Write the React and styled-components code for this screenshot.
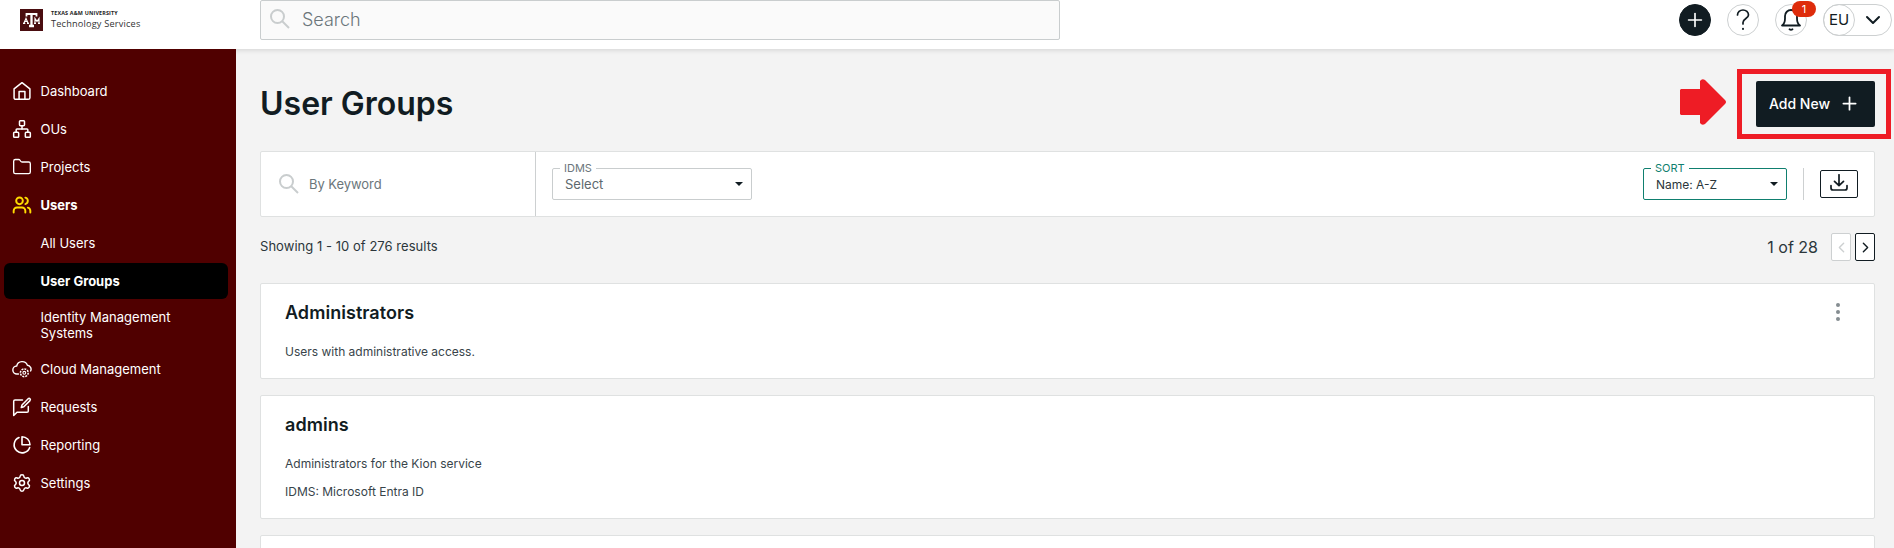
import React from "react";
import styled, { createGlobalStyle, css } from "styled-components";
import { Network, Folder, Users, Settings, Plus, ChevronDown, ChevronLeft, ChevronRight } from "lucide-react";

const Global = createGlobalStyle`
  *, *::before, *::after { box-sizing: border-box; }
  html, body, #root { height: 100%; }
  body {
    margin: 0;
    overflow: hidden;
    background: #f3f3f3;
    color: #111c22;
    font-family: Inter, "Liberation Sans", sans-serif;
  }
  h1, h2, p { margin: 0; }
  button { font-family: inherit; padding: 0; }
  svg { display: block; flex: none; }
`;

const Page = styled.div`
  display: flex;
  flex-direction: column;
  height: 548px;
  overflow: hidden;
`;

const TopBar = styled.header`
  position: relative;
  display: flex;
  align-items: flex-start;
  flex: none;
  height: 49px;
  background: #fff;
  box-shadow: 0 1px 5px rgba(0, 0, 0, 0.14);
`;

const Brand = styled.div`
  display: flex;
  gap: 8px;
  width: 260px;
  padding: 9px 0 0 20px;
`;

const BrandText = styled.div`
  display: flex;
  flex-direction: column;
  font-family: "Open Sans", sans-serif;
  white-space: nowrap;
`;

const BrandTop = styled.span`
  margin-top: 1px;
  height: 8px;
  font-size: 5.4px;
  font-weight: 700;
  line-height: 7px;
  letter-spacing: 0.16px;
  color: #222;
`;

const BrandName = styled.span`
  font-size: 9.2px;
  line-height: 12px;
  letter-spacing: 0.18px;
  color: #333;
`;

const SearchBox = styled.div`
  display: flex;
  align-items: center;
  gap: 12px;
  width: 800px;
  height: 40px;
  padding: 0 0 2px 9px;
  border: 1px solid #c9cdce;
  border-radius: 2px;
  background: #fafafa;
  color: #6b767b;
  font-size: 18px;
  font-weight: 300;
`;

const Actions = styled.div`
  display: flex;
  gap: 16px;
  margin-left: auto;
  padding: 4px 2px 0 0;
`;

const RoundButton = styled.button`
  position: relative;
  display: flex;
  align-items: center;
  justify-content: center;
  width: 32px;
  height: 32px;
  border: 1px solid ${(p) => (p.$dark ? "#111c22" : "#cdd0d1")};
  border-radius: 50%;
  background: ${(p) => (p.$dark ? "#111c22" : "#fff")};
  color: ${(p) => (p.$dark ? "#fff" : "#111c22")};
`;

const Badge = styled.span`
  position: absolute;
  top: -4px;
  left: 16px;
  width: 24px;
  height: 16px;
  border-radius: 8px;
  background: #de2c0b;
  color: #fff;
  font-size: 11px;
  line-height: 16px;
  text-align: center;
`;

const Account = styled.div`
  display: flex;
  align-items: center;
  width: 69px;
  height: 32px;
  border: 1px solid #cdd0d1;
  border-radius: 16px;
`;

const Initials = styled.span`
  width: 32px;
  height: 32px;
  margin: -1px 6px -1px -1px;
  border: 1px solid #cdd0d1;
  border-radius: 50%;
  font-size: 15px;
  line-height: 30px;
  text-align: center;
`;

const Body = styled.div`
  display: flex;
  flex: 1;
  min-height: 0;
`;

const Sidebar = styled.nav`
  position: relative;
  flex: none;
  width: 236px;
  padding: 24px 8px 0 4px;
  background: #500000;
`;

const NavItem = styled.a`
  display: flex;
  align-items: center;
  gap: 8px;
  height: ${(p) => (p.$tall ? "48px" : "36px")};
  margin-bottom: 2px;
  padding: 0 ${(p) => (p.$tall ? "24px 1px" : "0 0")} ${(p) => (p.$sub ? "36.5px" : "8px")};
  border-radius: 6px;
  color: #fff;
  font-size: 13px;
  line-height: 16px;
  ${(p) => p.$strong && css`font-weight: 700;`}
  ${(p) => p.$current && css`background: #000;`}
`;

const NavIcon = styled.span`
  display: flex;
  width: 20.5px;
  color: ${(p) => (p.$active ? "#ffdc00" : "#fff")};
`;

const Main = styled.main`
  flex: 1;
  padding: 20px 0 0 24px;
  overflow: hidden;
`;

const TitleRow = styled.div`
  display: flex;
  align-items: center;
  height: 70px;
  padding-right: 3px;
`;

const Title = styled.h1`
  flex: 1;
  padding-bottom: 1px;
  font-size: 32px;
  font-weight: 600;
  line-height: 40px;
`;

const Pointer = styled.div`
  padding-bottom: 4px;
`;

const Highlight = styled.div`
  width: 154px;
  height: 70px;
  margin-left: 11px;
  padding: 7px 11px 0 14px;
  border: 5px solid #ee1c25;
`;

const AddButton = styled.button`
  display: flex;
  align-items: center;
  justify-content: space-between;
  width: 119px;
  height: 46px;
  padding: 0 15px 1px 13px;
  border: 0;
  border-radius: 2px;
  background: #111c22;
  color: #fff;
  font-size: 14px;
  font-weight: 500;
`;

const Content = styled.div`
  width: 1615px;
`;

const FilterBar = styled.section`
  display: flex;
  align-items: center;
  height: 66px;
  margin-top: 12px;
  padding-right: 16px;
  border: 1px solid #dfe1e1;
  border-radius: 2px;
  background: #fff;
`;

const Keyword = styled.div`
  display: flex;
  align-items: center;
  gap: 10px;
  width: 275px;
  height: 100%;
  margin-right: 16px;
  padding-left: 18px;
  border-right: 1px solid #cdd0d1;
  color: #6b767b;
  font-size: 13px;
  letter-spacing: -0.05px;
`;

const Field = styled.div`
  position: relative;
  display: flex;
  align-items: center;
  justify-content: space-between;
  width: ${(p) => p.$width};
  height: 32px;
  padding: 0 8px 0 12px;
  border: 1px solid ${(p) => (p.$active ? "#0f7f6f" : "#c9cdce")};
  border-radius: 2px;
  font-size: ${(p) => (p.$active ? "12px" : "13px")};
  color: ${(p) => (p.$active ? "#2b363b" : "#5d686d")};
`;

const FieldLabel = styled.span`
  position: absolute;
  top: -7px;
  left: 7px;
  padding: 0 4px;
  background: #fff;
  color: ${(p) => (p.$active ? "#0f7f6f" : "#6b767b")};
  font-size: 11px;
  line-height: 13px;
`;

const Caret = styled.span`
  border: 4px solid transparent;
  border-top-color: #111c22;
  border-bottom-width: 0;
`;

const Separator = styled.span`
  width: 1px;
  height: 32px;
  margin: 0 16px 0 auto;
  background: #cdd0d1;
`;

const SortGroup = styled.div`
  display: flex;
  align-items: center;
  width: 215px;
  margin-left: auto;
`;

const IconButton = styled.button`
  display: flex;
  align-items: center;
  justify-content: center;
  width: ${(p) => p.$width};
  height: 28px;
  border: 1px solid ${(p) => (p.$muted ? "#cdd0d1" : "#111c22")};
  border-radius: 2px;
  background: #fff;
  color: ${(p) => (p.$muted ? "#cdd0d1" : "#111c22")};
`;

const ResultRow = styled.div`
  display: flex;
  align-items: center;
  gap: 4px;
  height: 28px;
  margin: 16px 0 22px;
`;

const ResultCount = styled.span`
  flex: 1;
  padding-bottom: 2px;
  font-size: 13px;
  letter-spacing: 0.04px;
  color: #2b363b;
`;

const PageCount = styled.span`
  margin-right: 9px;
  font-size: 16px;
  color: #2b363b;
`;

const Card = styled.article`
  display: flex;
  justify-content: space-between;
  height: ${(p) => p.$height};
  margin-bottom: 16px;
  padding: 17px 34px 0 24px;
  border: 1px solid #dfe1e1;
  border-radius: 2px;
  background: #fff;
`;

const CardTitle = styled.h2`
  margin-bottom: 15px;
  font-size: 18px;
  font-weight: 600;
  line-height: 24px;
  letter-spacing: 0.05px;
`;

const CardLine = styled.p`
  margin-bottom: 4px;
  font-size: 12px;
  line-height: 24px;
  color: #38444a;
`;

const Kebab = styled.span`
  display: flex;
  flex-direction: column;
  gap: 3px;
  padding-top: 2px;
`;

const Dot = styled.i`
  width: 4px;
  height: 4px;
  border-radius: 50%;
  background: #858d91;
`;

const line = { fill: "none", stroke: "currentColor", strokeLinecap: "round", strokeLinejoin: "round" };

const SearchIcon = () => (
  <svg width="20" height="20" viewBox="0 0 20 20" fill="none" stroke="#c9cdce" strokeWidth="2">
    <circle cx="7.5" cy="7.5" r="6.5" />
    <path d="M12 12l7 7" />
  </svg>
);

const HomeIcon = () => (
  <svg width="20" height="20" viewBox="0 0 24 24" {...line} strokeWidth="1.8">
    <path d="M2.500 9.500 12 2l9.500 7.500V20a2 2 0 0 1-2 2h-15a2 2 0 0 1-2-2z" />
    <path d="M8.500 22V12.500h7V22" />
  </svg>
);

const CloudGearIcon = () => (
  <svg width="20" height="20" viewBox="0 0 20 20" {...line} strokeWidth="1.4">
    <path d="M6.500 15H5a4 4 0 0 1-.3-8A5.600 5.600 0 0 1 15.400 6.300 3.900 3.900 0 0 1 18.600 12" />
    <circle cx="12.300" cy="13.800" r="3.900" strokeWidth="1.500" strokeDasharray="2 1" strokeLinecap="butt" />
    <circle cx="12.300" cy="13.800" r="1.400" strokeWidth="1.100" />
  </svg>
);

const RequestIcon = () => (
  <svg width="20" height="20" viewBox="0 0 20 20" {...line} strokeWidth="1.500">
    <path d="M10.500 3H3Q1.700 3 1.700 4.300V18.500L5 15.200H15Q16.300 15.200 16.300 13.900V9.500" />
    <path d="M10 8 16.200 1.700Q17.200 1 18 1.800T18 3.600L11.800 9.800 9.300 10.500Z" />
  </svg>
);

const PieIcon = () => (
  <svg width="20" height="20" viewBox="0 0 20 20" {...line} strokeWidth="1.600">
    <path d="M7 2.500A8 8 0 1 0 17.700 12.500" />
    <path d="M10 1.700A8 8 0 0 1 18 9.700H10Z" />
  </svg>
);

const HelpIcon = () => (
  <svg width="16" height="22" viewBox="0 0 16 22" {...line} strokeWidth="1.700">
    <path d="M2.500 6A5.500 5 0 0 1 13.500 6C13.500 9.500 8 9.500 8 13.500V15" />
    <path d="M8 19.700V20.100" strokeWidth="2" />
  </svg>
);

const BellIcon = () => (
  <svg width="22" height="24" viewBox="0 0 22 24" {...line} strokeWidth="1.800">
    <path d="M2 17.500H20Q17 15.500 17 10.500V8A6 6 0 0 0 5 8V10.500Q5 15.500 2 17.500Z" />
    <path d="M9.500 21.300Q11 22.500 12.500 21.300" />
  </svg>
);

const DownloadIcon = () => (
  <svg width="20" height="20" viewBox="0 0 20 20" {...line} strokeWidth="1.700">
    <path d="M10 0.800V11.300M5.500 7.300 10 11.700 14.500 7.300M2 11.500V14Q2 16 4 16H16Q18 16 18 14V11.500" />
  </svg>
);

const BrandMark = () => (
  <svg width="23" height="22" viewBox="0 0 23 22">
    <path fill="#4a0d10" d="M0 0H23V22H0z" />
    <g fill="none" stroke="#fff" strokeWidth="1.200">
      <path d="M6.500 7.500V5H16.500V7.500" strokeWidth="1.800" />
      <path d="M11.500 5V17M9 17H14" strokeWidth="2.300" />
      <path d="M4 14 6 9.500 8 14M5 12.500H7.500M3 14.400H5.300M7 14.400H9" />
      <path d="M15 14V9.500L17 12.500 19 9.500V14M14 14.400H16M18 14.400H20" />
    </g>
  </svg>
);

const Arrow = () => (
  <svg width="46" height="46" viewBox="0 0 46 46" fill="#ee1c25">
    <path d="M1 10H20V2Q22-1 25 1L45 21Q47 23 45 25L25 45Q22 47 20 44V36H1L0 35V11Z" />
  </svg>
);

const NAV = [
  { label: "Dashboard", icon: <HomeIcon /> },
  { label: "OUs", icon: <Network size={20} strokeWidth={1.8} /> },
  { label: "Projects", icon: <Folder size={20} strokeWidth={1.6} /> },
  { label: "Users", icon: <Users size={20} strokeWidth={2.3} />, active: true },
  { label: "All Users", sub: true },
  { label: "User Groups", sub: true, current: true },
  { label: "Identity Management Systems", sub: true, tall: true },
  { label: "Cloud Management", icon: <CloudGearIcon /> },
  { label: "Requests", icon: <RequestIcon /> },
  { label: "Reporting", icon: <PieIcon /> },
  { label: "Settings", icon: <Settings size={20} strokeWidth={1.8} /> },
];

const GROUPS = [
  { name: "Administrators", lines: ["Users with administrative access."], height: "96px", menu: true },
  { name: "admins", lines: ["Administrators for the Kion service", "IDMS: Microsoft Entra ID"], height: "124px" },
  { name: "", lines: [], height: "96px" },
];

export default function App() {
  return (
    <Page>
      <Global />
      <TopBar>
        <Brand>
          <BrandMark />
          <BrandText>
            <BrandTop>TEXAS A&amp;M UNIVERSITY</BrandTop>
            <BrandName>Technology Services</BrandName>
          </BrandText>
        </Brand>
        <SearchBox><SearchIcon />Search</SearchBox>
        <Actions>
          <RoundButton $dark><Plus size={22} strokeWidth={1.8} /></RoundButton>
          <RoundButton><HelpIcon /></RoundButton>
          <RoundButton><BellIcon /><Badge>1</Badge></RoundButton>
          <Account><Initials>EU</Initials><ChevronDown size={24} strokeWidth={2} /></Account>
        </Actions>
      </TopBar>
      <Body>
        <Sidebar>
          {NAV.map((n) => (
            <NavItem key={n.label} $sub={n.sub} $tall={n.tall} $current={n.current} $strong={n.active || n.current}>
              {n.icon && <NavIcon $active={n.active}>{n.icon}</NavIcon>}
              <span>{n.label}</span>
            </NavItem>
          ))}
        </Sidebar>
        <Main>
          <TitleRow>
            <Title>User Groups</Title>
            <Pointer><Arrow /></Pointer>
            <Highlight>
              <AddButton>Add New<Plus size={21} strokeWidth={2} /></AddButton>
            </Highlight>
          </TitleRow>
          <Content>
            <FilterBar>
              <Keyword><SearchIcon />By Keyword</Keyword>
              <Field $width="200px"><FieldLabel>IDMS</FieldLabel>Select<Caret /></Field>
              <SortGroup>
                <Field $width="144px" $active><FieldLabel $active>SORT</FieldLabel>Name: A-Z<Caret /></Field>
                <Separator />
                <IconButton $width="38px"><DownloadIcon /></IconButton>
              </SortGroup>
            </FilterBar>
            <ResultRow>
              <ResultCount>Showing 1 - 10 of 276 results</ResultCount>
              <PageCount>1 of 28</PageCount>
              <IconButton $width="20px" $muted><ChevronLeft size={17} /></IconButton>
              <IconButton $width="20px"><ChevronRight size={17} /></IconButton>
            </ResultRow>
            {GROUPS.map((g, i) => (
              <Card key={i} $height={g.height}>
                <div>
                  <CardTitle>{g.name}</CardTitle>
                  {g.lines.map((t) => <CardLine key={t}>{t}</CardLine>)}
                </div>
                {g.menu && <Kebab><Dot /><Dot /><Dot /></Kebab>}
              </Card>
            ))}
          </Content>
        </Main>
      </Body>
    </Page>
  );
}
